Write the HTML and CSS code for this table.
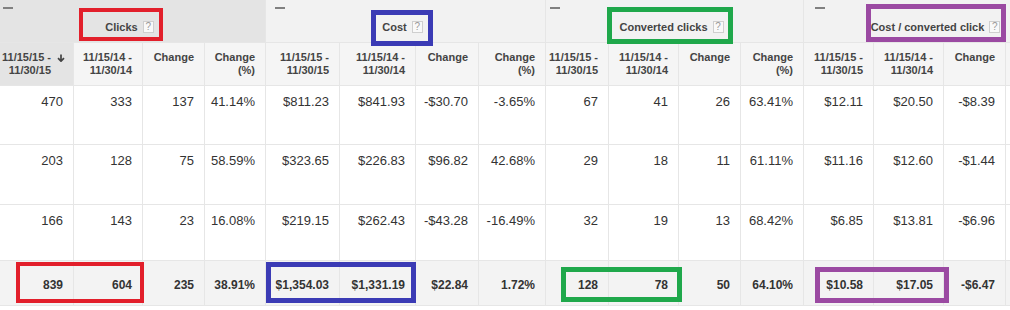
FILE: index.html
```html
<!DOCTYPE html>
<html>
<head>
<meta charset="utf-8">
<link rel="stylesheet" href="styles.css">
</head>
<body>
<div class="report">
  <div class="grid">
    <div class="group group-sorted g1"><span class="dash"></span><span class="title">Clicks <span class="qbox">?</span></span></div>
    <div class="group g2"><span class="dash"></span><span class="title">Cost <span class="qbox">?</span></span></div>
    <div class="group g3"><span class="dash"></span><span class="title">Converted clicks <span class="qbox">?</span></span></div>
    <div class="group g4"><span class="dash"></span><span class="title">Cost / converted click <span class="qbox">?</span></span></div>

    <div class="ch ch-sorted"><span>11/15/15 -<br>11/30/15</span><svg class="sort" width="8" height="8" viewBox="0 0 8 8"><path d="M4 0.5V7M1 4.2L4 7.2L7 4.2" fill="none" stroke="#444" stroke-width="1.7"/></svg></div>
    <div class="ch">11/15/14 -<br>11/30/14</div>
    <div class="ch">Change</div>
    <div class="ch">Change<br>(%)</div>
    <div class="ch">11/15/15 -<br>11/30/15</div>
    <div class="ch">11/15/14 -<br>11/30/14</div>
    <div class="ch">Change</div>
    <div class="ch">Change<br>(%)</div>
    <div class="ch">11/15/15 -<br>11/30/15</div>
    <div class="ch">11/15/14 -<br>11/30/14</div>
    <div class="ch">Change</div>
    <div class="ch">Change<br>(%)</div>
    <div class="ch">11/15/15 -<br>11/30/15</div>
    <div class="ch">11/15/14 -<br>11/30/14</div>
    <div class="ch">Change</div>
    <div class="ch"></div>

    <div class="c">470</div><div class="c">333</div><div class="c">137</div><div class="c">41.14%</div>
    <div class="c">$811.23</div><div class="c">$841.93</div><div class="c">-$30.70</div><div class="c">-3.65%</div>
    <div class="c">67</div><div class="c">41</div><div class="c">26</div><div class="c">63.41%</div>
    <div class="c">$12.11</div><div class="c">$20.50</div><div class="c">-$8.39</div><div class="c"></div>

    <div class="c">203</div><div class="c">128</div><div class="c">75</div><div class="c">58.59%</div>
    <div class="c">$323.65</div><div class="c">$226.83</div><div class="c">$96.82</div><div class="c">42.68%</div>
    <div class="c">29</div><div class="c">18</div><div class="c">11</div><div class="c">61.11%</div>
    <div class="c">$11.16</div><div class="c">$12.60</div><div class="c">-$1.44</div><div class="c"></div>

    <div class="c">166</div><div class="c">143</div><div class="c">23</div><div class="c">16.08%</div>
    <div class="c">$219.15</div><div class="c">$262.43</div><div class="c">-$43.28</div><div class="c">-16.49%</div>
    <div class="c">32</div><div class="c">19</div><div class="c">13</div><div class="c">68.42%</div>
    <div class="c">$6.85</div><div class="c">$13.81</div><div class="c">-$6.96</div><div class="c"></div>

    <div class="c t">839</div><div class="c t">604</div><div class="c t">235</div><div class="c t">38.91%</div>
    <div class="c t">$1,354.03</div><div class="c t">$1,331.19</div><div class="c t">$22.84</div><div class="c t">1.72%</div>
    <div class="c t">128</div><div class="c t">78</div><div class="c t">50</div><div class="c t">64.10%</div>
    <div class="c t">$10.58</div><div class="c t">$17.05</div><div class="c t">-$6.47</div><div class="c t"></div>
  </div>

  <div class="mark red m-top-clicks"></div>
  <div class="mark blue m-top-cost"></div>
  <div class="mark green m-top-conv"></div>
  <div class="mark purple m-top-cpc"></div>
  <div class="mark red m-bot-clicks"></div>
  <div class="mark blue m-bot-cost"></div>
  <div class="mark green m-bot-conv"></div>
  <div class="mark purple m-bot-cpc"></div>
</div>
</body>
</html>
```
FILE: styles.css
```css
html, body {
  margin: 0;
  padding: 0;
  background: #fff;
}

body {
  font-family: "Liberation Sans", Arial, sans-serif;
  overflow: hidden;
}

.report {
  position: relative;
  width: 1010px;
  height: 310px;
  overflow: hidden;
}

.grid {
  display: grid;
  grid-template-columns: 74px 69px 62px 61px 74px 76px 63px 67px 63px 70px 62px 63px 70px 70px 62px 68px;
  grid-template-rows: 43px 43px 59px 60px 56px 45px;
  width: 1074px;
}

.grid > div {
  box-sizing: border-box;
  border-right: 1px solid #e6e6e6;
  border-bottom: 1px solid #e6e6e6;
}

/* group header row */
.group {
  grid-column: span 4;
  display: flex;
  flex-direction: column;
  padding-top: 7px;
  background: #f2f2f2;
}

.group-sorted {
  background: #e4e4e4;
}

.g1 .dash { margin-left: 3px; }
.g2 .dash { margin-left: 9px; }
.g3 .dash { margin-left: 4px; }
.g4 .dash { margin-left: 11px; }

.dash {
  width: 10px;
  height: 2px;
  background: #808080;
}

.title {
  align-self: center;
  margin-top: 11px;
  margin-right: 6px;
  display: inline-flex;
  align-items: center;
  gap: 5px;
  font-size: 11px;
  font-weight: bold;
  line-height: 14px;
  color: #444;
}

.qbox {
  box-sizing: border-box;
  width: 11px;
  height: 12px;
  border: 1px solid #cfcfcf;
  background: #f9f9f9;
  font-size: 10px;
  line-height: 10px;
  font-weight: normal;
  color: #999;
  text-align: center;
}

/* column header row */
.ch {
  padding: 8px 10px 0 2px;
  text-align: right;
  font-size: 11px;
  font-weight: bold;
  line-height: 13px;
  color: #444;
  background: #f5f5f5;
}

.ch-sorted {
  display: flex;
  justify-content: flex-end;
  align-items: flex-start;
  gap: 6px;
  padding-right: 8px;
  background: #e4e4e4;
}

.sort {
  margin-top: 3px;
  flex: none;
}

/* data cells */
.c {
  padding: 8px 10px 0 0;
  text-align: right;
  font-size: 13px;
  line-height: 16px;
  color: #333;
  white-space: nowrap;
}

.t {
  padding-top: 16px;
  font-size: 12px;
  font-weight: bold;
  background: #f3f3f3;
}

/* annotation boxes drawn over the screenshot */
.mark {
  position: absolute;
  box-sizing: border-box;
  border-style: solid;
}

.red { border-color: #e21f2b; border-width: 4px; }
.blue { border-color: #3b3bb5; border-width: 5px; }
.green { border-color: #1fa84b; border-width: 5px; }
.purple { border-color: #9b4aa2; border-width: 5px; }

.m-top-clicks { left: 79px; top: 8px; width: 84px; height: 33px; }
.m-top-cost { left: 371px; top: 10px; width: 62px; height: 36px; }
.m-top-conv { left: 607px; top: 7px; width: 126px; height: 37px; }
.m-top-cpc { left: 866px; top: 4px; width: 140px; height: 38px; }

.m-bot-clicks { left: 16px; top: 262px; width: 128px; height: 41px; }
.m-bot-cost { left: 266px; top: 262px; width: 150px; height: 41px; }
.m-bot-conv { left: 561px; top: 267px; width: 121px; height: 35px; }
.m-bot-cpc { left: 815px; top: 267px; width: 134px; height: 36px; }
```
